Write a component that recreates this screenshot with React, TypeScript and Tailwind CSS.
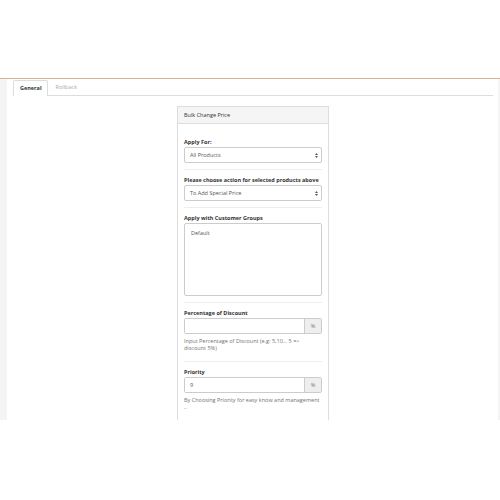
import React from "react";

function Arrows() {
  return (
    <svg width="3" height="5" viewBox="0 0 3 5" className="shrink-0">
      <path d="M1.5 0 L3 2 L0 2 Z" fill="#555" />
      <path d="M1.5 5 L3 3 L0 3 Z" fill="#555" />
    </svg>
  );
}

function Select({ value }: { value: string }) {
  return (
    <div className="flex h-[16px] items-center justify-between rounded-[2px] border border-[#ccc] bg-white pl-[5px] pr-[3px] text-[5.5px] text-[#555]">
      <span>{value}</span>
      <Arrows />
    </div>
  );
}

function PercentInput({ value }: { value?: string }) {
  return (
    <div className="flex h-[16px] rounded-[2px] border border-[#ccc] text-[5.5px] text-[#555]">
      <div className="flex flex-1 items-center bg-white pl-[5px]">{value}</div>
      <div className="flex w-[17px] items-center justify-center border-l border-[#ccc] bg-[#eee] text-[#777]">
        %
      </div>
    </div>
  );
}

function Group({
  label,
  first,
  last,
  children,
}: {
  label: string;
  first?: boolean;
  last?: boolean;
  children: React.ReactNode;
}) {
  return (
    <div
      className={
        (first ? "pt-[15px] " : "pt-[7px] ") +
        (last ? "pb-[6px]" : "border-b border-[#eee] pb-[6px]")
      }
    >
      <div className="mb-[1px] text-[5.5px] font-bold leading-[7px] text-[#333]">{label}</div>
      {children}
    </div>
  );
}

export default function App() {
  return (
    <div className="h-[500px] w-[500px] overflow-hidden bg-white font-['Open_Sans',sans-serif]">
      <div className="h-[78px]" />
      <div className="h-[1px] bg-[#dcae92]" />
      <div className="flex h-[341px] overflow-hidden bg-[#f4f4f4] pl-[7px] pr-[2px]">
        <div className="flex-1 bg-white pl-[6px] pr-[5px] pt-[1px]">
          {/* tabs */}
          <div className="flex h-[16px] border-b border-[#ddd] text-[5.5px]">
            <div className="-mb-[1px] flex items-center rounded-t-[2px] border border-b-0 border-[#ddd] bg-white pl-[6px] pr-[5px] font-bold text-[#333]">
              General
            </div>
            <div className="flex items-center pl-[8px] text-[#aaa]">Rollback</div>
          </div>

          {/* panel */}
          <div className="mx-auto mt-[10px] w-[152px] border border-[#ddd] bg-white">
            <div className="flex h-[17px] items-center border-b border-[#ddd] bg-[#f5f5f5] pl-[6px] text-[5.5px] text-[#333]">
              Bulk Change Price
            </div>
            <div className="pl-[6px] pr-[6px]">
              <Group label="Apply For:" first>
                <Select value="All Products" />
              </Group>
              <Group label="Please choose action for selected products above">
                <Select value="To Add Special Price" />
              </Group>
              <Group label="Apply with Customer Groups">
                <div className="h-[73px] rounded-[2px] border border-[#ccc] bg-white px-[6px] pt-[5px] text-[5.5px] text-[#555]">
                  Default
                </div>
              </Group>
              <Group label="Percentage of Discount">
                <PercentInput />
                <div className="mb-[3px] mt-[4px] text-[5.5px] leading-[7px] text-[#737373]">
                  Input Percentage of Discount (e.g: 5,10... 5 =&gt;
                  <br />
                  discount 5%)
                </div>
              </Group>
              <Group label="Priority" last>
                <PercentInput value="9" />
                <div className="mb-[3px] mt-[4px] text-[5.5px] leading-[7px] text-[#737373]">
                  By Choosing Priority for easy know and management
                  <br />
                  ..
                </div>
              </Group>
            </div>
          </div>
        </div>
      </div>
    </div>
  );
}
